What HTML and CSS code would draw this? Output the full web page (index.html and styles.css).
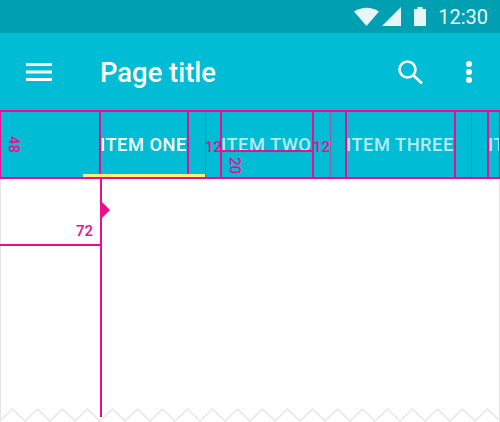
FILE: index.html
```html
<!DOCTYPE html>
<html lang="en">
<head>
    <meta charset="UTF-8">
    <title>Tabs spec</title>
    <link rel="stylesheet" href="styles.css">
</head>
<body>
    <div class="screen">
        <div class="status-bar">
            <svg class="wifi" width="25" height="19" viewBox="0 0 25 19"><path d="M12.5 19 L0 4.5 Q12.5 -3 25 4.5 Z" fill="#e6f6f9"/></svg>
            <svg class="signal" width="19" height="19" viewBox="0 0 19 19"><path d="M0 19 L19 0 V19 Z" fill="#e6f6f9"/></svg>
            <svg class="battery" width="12" height="19" viewBox="0 0 12 19"><path d="M0 2 H3.5 V0 H8.5 V2 H12 V19 H0 Z" fill="#e6f6f9"/></svg>
            <span class="clock">12:30</span>
        </div>

        <div class="toolbar">
            <svg class="menu-icon" width="26" height="18" viewBox="0 0 26 18"><path d="M0 0 H26 V3 H0 Z M0 7.5 H26 V10.5 H0 Z M0 15 H26 V18 H0 Z" fill="#fff"/></svg>
            <h1 class="page-title">Page title</h1>
            <svg class="search-icon" width="26" height="24" viewBox="0 0 26 24"><circle cx="9.5" cy="9.5" r="8" fill="none" stroke="#fff" stroke-width="2.6"/><path d="M15.5 15.5 L24 23.5" stroke="#fff" stroke-width="2.6" fill="none"/></svg>
            <div class="more-icon"><i></i><i></i><i></i></div>
        </div>

        <div class="tabs">
            <div class="cell w-keyline"><span class="num rotated">48</span></div>
            <div class="cell tab active w-one">ITEM ONE</div>
            <div class="cell w-gap thin"></div>
            <div class="cell w-gap2"><span class="num low">12</span></div>
            <div class="cell tab w-two">ITEM TWO
                <div class="tab-mark"><span class="num rotated">20</span></div>
            </div>
            <div class="cell w-gap thin"><span class="num low">12</span></div>
            <div class="cell w-gap2"></div>
            <div class="cell tab w-three">ITEM THREE</div>
            <div class="cell w-gap2 thin"></div>
            <div class="cell w-gap"></div>
            <div class="cell tab last">IT</div>
            <div class="indicator"></div>
        </div>

        <div class="sheet">
            <div class="keyline-box">
                <span class="num">72</span>
            </div>
            <div class="arrow"></div>
            <svg class="zigzag" width="500" height="14" viewBox="0 0 500 14"><path d="M0 13 L12.5 1 L25 13 L37.5 1 L50 13 L62.5 1 L75 13 L87.5 1 L100 13 L112.5 1 L125 13 L137.5 1 L150 13 L162.5 1 L175 13 L187.5 1 L200 13 L212.5 1 L225 13 L237.5 1 L250 13 L262.5 1 L275 13 L287.5 1 L300 13 L312.5 1 L325 13 L337.5 1 L350 13 L362.5 1 L375 13 L387.5 1 L400 13 L412.5 1 L425 13 L437.5 1 L450 13 L462.5 1 L475 13 L487.5 1 L500 13" fill="none" stroke="#e6e6e6" stroke-width="1.5"/></svg>
        </div>
    </div>
</body>
</html>
```

FILE: styles.css
```css
* {
    margin: 0;
    padding: 0;
    box-sizing: border-box;
}

body {
    font-family: 'Roboto', sans-serif;
    background: white;
}

.screen {
    width: 500px;
    height: 422px;
    display: flex;
    flex-direction: column;
    overflow: hidden;
}

.status-bar {
    height: 33px;
    background: #00a0b2;
    display: flex;
    align-items: center;
    justify-content: flex-end;
    padding-right: 12px;
    color: #e6f6f9;
}

.wifi {
    margin-right: 3px;
}

.signal {
    margin-right: 13px;
}

.battery {
    margin-right: 12px;
}

.clock {
    font-size: 20px;
}

.toolbar {
    height: 77px;
    background: #00bcd4;
    display: flex;
    align-items: center;
    padding: 0 28px 0 26px;
    color: white;
}

.menu-icon {
    margin-right: 48px;
    margin-top: 1px;
}

.page-title {
    flex: 1;
    font-size: 27.4px;
    font-weight: 500;
    padding-top: 3px;
}

.search-icon {
    margin-right: 42px;
}

.more-icon {
    display: flex;
    flex-direction: column;
    gap: 2px;
}

.more-icon i {
    display: block;
    width: 6px;
    height: 6px;
    border-radius: 50%;
    background: white;
}

.tabs {
    position: relative;
    height: 69px;
    background: #00bcd4;
    display: flex;
    border: 2px solid #ec0d8d;
    border-left-width: 1px;
    border-right-width: 1px;
}

.cell {
    flex: none;
    height: 100%;
    border-right: 2px solid #ec0d8d;
    display: flex;
    align-items: center;
}

.thin {
    border-right: 1px solid #8a5fa8;
}

.w-keyline {
    width: 100px;
}

.w-one {
    width: 88px;
}

.w-two {
    width: 92px;
}

.w-three {
    width: 109px;
}

.w-gap {
    width: 17px;
}

.w-gap2 {
    width: 16px;
}

.tab {
    position: relative;
    font-size: 18.3px;
    font-weight: 500;
    letter-spacing: 0.5px;
    text-indent: -1px;
    color: rgba(255, 255, 255, 0.72);
    white-space: nowrap;
}

.tab.active {
    color: white;
}

.tab.last {
    flex: 1;
    min-width: 0;
    overflow: hidden;
    border-right: none;
}

.tab-mark {
    position: absolute;
    left: 0;
    right: 0;
    top: 38px;
    border-top: 2px solid #ec0d8d;
    height: 27px;
}

.indicator {
    position: absolute;
    left: 82px;
    bottom: 0;
    width: 122px;
    height: 3px;
    background: #fff176;
}

.num {
    color: #ec0d8d;
    font-size: 15px;
    font-weight: 500;
    letter-spacing: 0;
    text-indent: 0;
    line-height: 1;
}

.num.low {
    margin: 6px 0 0 -1px;
}

.num.rotated {
    display: block;
    width: fit-content;
    transform: rotate(90deg);
    margin-left: 4px;
}

.tab-mark .num.rotated {
    margin-top: 6px;
}

.sheet {
    position: relative;
    flex: 1;
    border-left: 1px solid #e6e6e6;
    border-right: 1px solid #e6e6e6;
}

.keyline-box {
    width: 100px;
    height: 67px;
    margin-left: -1px;
    border-bottom: 2px solid #ec0d8d;
    display: flex;
    align-items: flex-end;
    justify-content: flex-end;
    padding: 0 7px 5px 0;
}

.sheet::before {
    content: "";
    position: absolute;
    left: 99px;
    top: 0;
    width: 2px;
    height: 238px;
    background: #ec0d8d;
}

.arrow {
    position: absolute;
    left: 101px;
    top: 23px;
    border-left: 8px solid #ec0d8d;
    border-top: 8px solid transparent;
    border-bottom: 8px solid transparent;
}

.zigzag {
    position: absolute;
    left: -1px;
    bottom: 0;
}
```
